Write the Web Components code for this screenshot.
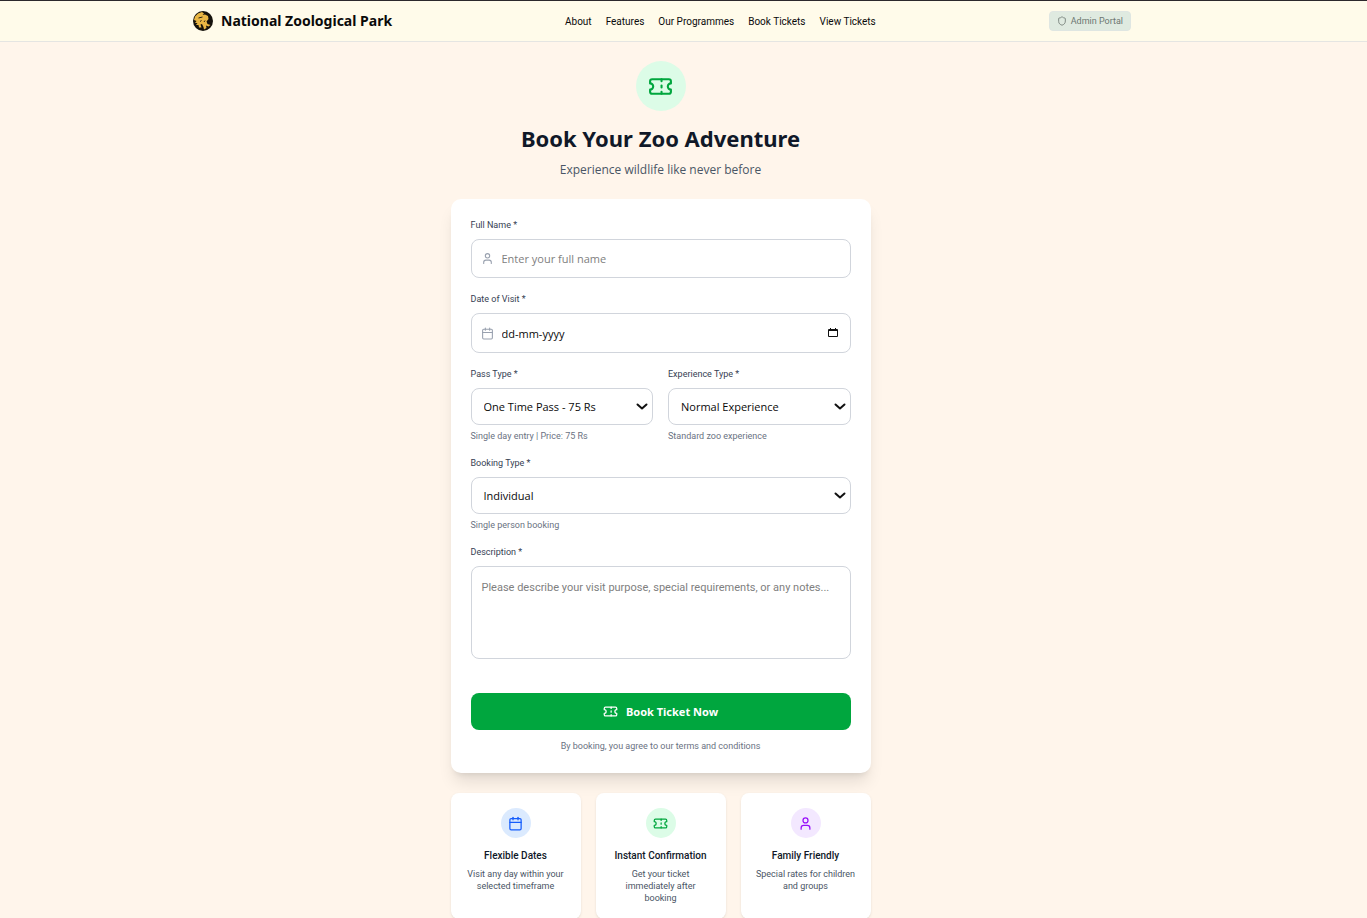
<!DOCTYPE html>
<html lang="en">
<head>
<meta charset="utf-8">
<meta name="viewport" content="width=device-width, initial-scale=1">
<title>National Zoological Park - Book Tickets</title>
<style>
  body { margin: 0; background: #fff5eb; color: #101828;
    --display: "Noto Sans", "Open Sans", sans-serif; --control: "Open Sans", "Noto Sans", sans-serif; --small: Roboto, "Noto Sans", sans-serif;
    font-family: var(--display); }
</style>
</head>
<body>
<zoo-page></zoo-page>
<script>
const ICONS = {
  ticket: '<path d="M2 9a3 3 0 0 1 0 6v2a2 2 0 0 0 2 2h16a2 2 0 0 0 2-2v-2a3 3 0 0 1 0-6V7a2 2 0 0 0-2-2H4a2 2 0 0 0-2 2Z"/><path d="M13 5v2"/><path d="M13 17v2"/><path d="M13 11v2"/>',
  user: '<path d="M19 21v-2a4 4 0 0 0-4-4H9a4 4 0 0 0-4 4v2"/><circle cx="12" cy="7" r="4"/>',
  calendar: '<path d="M8 2v4"/><path d="M16 2v4"/><rect width="18" height="18" x="3" y="4" rx="2"/><path d="M3 10h18"/>',
  shield: '<path d="M20 13c0 5-3.5 7.5-7.66 8.95a1 1 0 0 1-.67-.01C7.5 20.5 4 18 4 13V6a1 1 0 0 1 1-1c2 0 4.500-1.200 6.240-2.720a1.170 1.170 0 0 1 1.520 0C14.510 3.810 17 5 19 5a1 1 0 0 1 1 1z"/>',
  chevron: '<path d="m3 7 9 8 9-8"/>'
};

const define = (name, html) => customElements.define(name, class extends HTMLElement {
  connectedCallback() {
    if (this.shadowRoot) return;
    const root = this.attachShadow({ mode: "open" });
    const template = document.createElement("template");
    template.innerHTML = "<style>*{box-sizing:border-box}</style>" + (typeof html === "function" ? html(this) : html);
    root.append(template.content.cloneNode(true));
  }
});

define("zoo-icon", el => `
  <style>
    :host { display: inline-flex; flex: none; width: var(--icon-size, 15px); height: var(--icon-size, 15px); }
    svg { width: 100%; height: 100%; fill: none; stroke: currentColor; stroke-linecap: round; stroke-linejoin: round; }
  </style>
  <svg viewBox="0 0 24 24" stroke-width="${el.getAttribute("weight") || 2}" aria-hidden="true">${ICONS[el.getAttribute("name")]}</svg>`);

define("zoo-logo", `
  <style>
    :host { display: block; flex: none; width: 20px; height: 20px; }
    svg { display: block; width: 100%; height: 100%; }
  </style>
  <svg viewBox="0 0 20 20" aria-hidden="true">
    <circle cx="10" cy="10" r="10" fill="#15120c"/>
    <path fill="#e9b644" d="M1 9 2 5.500 5 2.500 9 1 11 2.500 9.500 4 12 3.500 15 5 15.500 8 13.500 10.500 14.500 13 17.500 14 15.500 15.500 13 14.500 13.500 17 11 18.500 10.500 16 9 13 7.500 13.500 8.500 16.500 6 16.500 5.500 14 3 14 4.500 12 2 12 3.500 10Z"/>
    <path fill="none" stroke="#15120c" stroke-width=".9" d="M5.500 7 9.500 6M7 10.500 8.500 9.500M11 11 12 9.500"/>
  </svg>`);

define("zoo-header", `
  <style>
    :host { display: block; padding-right: 43px; background: #fffbea; border-top: 1px solid #2c282c; border-bottom: 1px solid #e5e5e2; }
    .bar { display: flex; justify-content: space-between; align-items: center; max-width: 938px; padding: 10px 0; margin: 0 auto; color: #0a0a0a; }
    .brand { display: flex; align-items: center; gap: 8px; font-size: 14px; font-weight: 700; line-height: 20px; color: inherit; text-decoration: none; }
    nav { display: flex; gap: 14px; font-family: var(--small); font-size: 10px; line-height: 15px; }
    nav a { color: inherit; text-decoration: none; }
    button { display: flex; align-items: center; gap: 4px; height: 20px; padding: 0 7px;
      border: 1px solid #dfe6e2; border-radius: 4px; background: #dfeae0; color: #6d7771; font: 9px/12px var(--small); --icon-size: 10px; }
  </style>
  <div class="bar">
    <a class="brand" href="#"><zoo-logo></zoo-logo>National Zoological Park</a>
    <nav><a href="#about">About</a><a href="#features">Features</a><a href="#programmes">Our Programmes</a><a href="#book">Book Tickets</a><a href="#view">View Tickets</a></nav>
    <button type="button"><zoo-icon name="shield"></zoo-icon>Admin Portal</button>
  </div>`);

define("zoo-hero", `
  <style>
    :host { display: flex; flex-direction: column; align-items: center; text-align: center; }
    .badge { display: flex; align-items: center; justify-content: center; width: 50px; height: 50px; border-radius: 50%;
      background: #dcfce7; color: #00a63e; --icon-size: 25px; }
    h1 { margin: 13px 0 0; font-size: 22px; line-height: 28px; font-weight: 700; }
    p { margin: 10px 0 0; font-family: var(--control); font-size: 12px; line-height: 16px; color: #4a5565; }
  </style>
  <div class="badge"><zoo-icon name="ticket"></zoo-icon></div>
  <h1>Book Your Zoo Adventure</h1>
  <p>Experience wildlife like never before</p>`);

define("zoo-field", el => {
  const kind = el.getAttribute("kind");
  const label = el.getAttribute("label");
  const hint = el.getAttribute("hint");
  const text = el.getAttribute("text");
  const icon = el.getAttribute("icon");
  let control;
  if (kind === "select") control = `<select id="control"><option>${text}</option></select><zoo-icon class="arrow" name="chevron" weight="4"></zoo-icon>`;
  else if (kind === "area") control = `<textarea id="control" placeholder="${text}"></textarea>`;
  else control = `<zoo-icon class="lead" name="${icon}"></zoo-icon><input id="control" type="text" class="${kind}" placeholder="${text}">` +
    (kind === "date" ? `<button type="button" aria-label="Choose date"><svg viewBox="0 0 10 10" aria-hidden="true"><path fill="#111" fill-rule="evenodd" d="M2 0h1v1h4V0h1v1h1a1 1 0 0 1 1 1v6a1 1 0 0 1-1 1H1a1 1 0 0 1-1-1V2a1 1 0 0 1 1-1h1ZM1 3v5h8V3Z"/></svg></button>` : "");
  return `
  <style>
    :host { display: block; min-width: 0; }
    label { display: block; font: 9px/12px var(--small); color: #364153; }
    .box { position: relative; display: flex; align-items: center; margin-top: 8px; }
    input, select, textarea { display: block; width: 100%; margin: 0; border: 1px solid #d1d5dc; border-radius: 8px; outline: none;
      background: #fff; color: #0a0a0a; font: 11px/16px var(--control); }
    input { height: 39px; padding: 0 30px; }
    input.date { height: 40px; }
    ::placeholder { color: #808080; opacity: 1; }
    input.date::placeholder { color: #0a0a0a; }
    select { height: 37px; padding: 0 24px 0 12px; appearance: none; }
    textarea { height: 93px; padding: 13px 10px; resize: none; font-family: var(--small); }
    .lead { position: absolute; left: 10px; color: #99a1af; --icon-size: 13px; }
    .arrow { position: absolute; right: 5px; pointer-events: none; color: #111; --icon-size: 12px; }
    button { position: absolute; right: 13px; display: flex; width: 10px; height: 10px; padding: 0; border: 0; background: none; }
    p { margin: 5px 0 0; font: 9px/12px var(--small); color: #6a7282; }
  </style>
  <label for="control">${label}</label>
  <div class="box">${control}</div>
  ${hint ? `<p>${hint}</p>` : ""}`;
});

define("zoo-booking-form", `
  <style>
    :host { display: block; padding: 20px; border-radius: 10px; background: #fff;
      box-shadow: 0 12px 16px -3px rgb(0 0 0 / .1), 0 5px 6px -4px rgb(0 0 0 / .1); }
    form { display: grid; gap: 15px; margin: 0; }
    .pair { display: grid; grid-template-columns: 1fr 1fr; gap: 15px; }
    button { display: flex; align-items: center; justify-content: center; gap: 8px; width: 100%; height: 37px; margin-top: 19px; padding: 0;
      border: 0; border-radius: 8px; background: #00a63e; color: #fff; font: 700 11px/16px var(--display); --icon-size: 15px; }
    p { margin: 10px 0 0; font: 9px/13px var(--small); text-align: center; color: #6a7282; }
  </style>
  <form>
    <zoo-field kind="text" icon="user" label="Full Name *" text="Enter your full name"></zoo-field>
    <zoo-field kind="date" icon="calendar" label="Date of Visit *" text="dd-mm-yyyy"></zoo-field>
    <div class="pair">
      <zoo-field kind="select" label="Pass Type *" text="One Time Pass - 75 Rs" hint="Single day entry | Price: 75 Rs"></zoo-field>
      <zoo-field kind="select" label="Experience Type *" text="Normal Experience" hint="Standard zoo experience"></zoo-field>
    </div>
    <zoo-field kind="select" label="Booking Type *" text="Individual" hint="Single person booking"></zoo-field>
    <zoo-field kind="area" label="Description *" text="Please describe your visit purpose, special requirements, or any notes..."></zoo-field>
    <button type="button"><zoo-icon name="ticket"></zoo-icon>Book Ticket Now</button>
  </form>
  <p>By booking, you agree to our terms and conditions</p>`);

define("zoo-feature", el => `
  <style>
    :host { display: flex; flex-direction: column; align-items: center; padding: 15px; border-radius: 8px; background: #fff; text-align: center;
      box-shadow: 0 1px 3px rgb(0 0 0 / .08), 0 1px 2px -1px rgb(0 0 0 / .1); }
    .badge { display: flex; align-items: center; justify-content: center; width: 30px; height: 30px; border-radius: 50%;
      background: var(--tint); color: var(--tone); --icon-size: 15px; }
    h3 { margin: 10px 0 0; font: 500 10px/15px var(--small); white-space: nowrap; }
    p { margin: 5px 0 0; font: 9px/12px var(--small); color: #4a5565; }
  </style>
  <div class="badge"><zoo-icon name="${el.getAttribute("icon")}"></zoo-icon></div>
  <h3>${el.getAttribute("heading")}</h3>
  <p><slot></slot></p>`);

define("zoo-page", `
  <style>
    :host { display: block; }
    .wrap { padding: 19px 46px 20px 0; }
    main { max-width: 420px; margin: 0 auto; }
    zoo-booking-form { margin-top: 21px; }
    .features { display: grid; grid-template-columns: repeat(3, minmax(0, 1fr)); gap: 15px; margin-top: 20px; }
    .blue { --tint: #dbeafe; --tone: #155dfc; }
    .green { --tint: #dcfce7; --tone: #00a63e; }
    .purple { --tint: #f3e8ff; --tone: #9810fa; }
  </style>
  <zoo-header></zoo-header>
  <div class="wrap"><main>
    <zoo-hero></zoo-hero>
    <zoo-booking-form></zoo-booking-form>
    <section class="features">
      <zoo-feature class="blue" icon="calendar" heading="Flexible Dates">Visit any day within your selected timeframe</zoo-feature>
      <zoo-feature class="green" icon="ticket" heading="Instant Confirmation">Get your ticket immediately after booking</zoo-feature>
      <zoo-feature class="purple" icon="user" heading="Family Friendly">Special rates for children and groups</zoo-feature>
    </section>
  </main></div>`);
</script>
</body>
</html>
